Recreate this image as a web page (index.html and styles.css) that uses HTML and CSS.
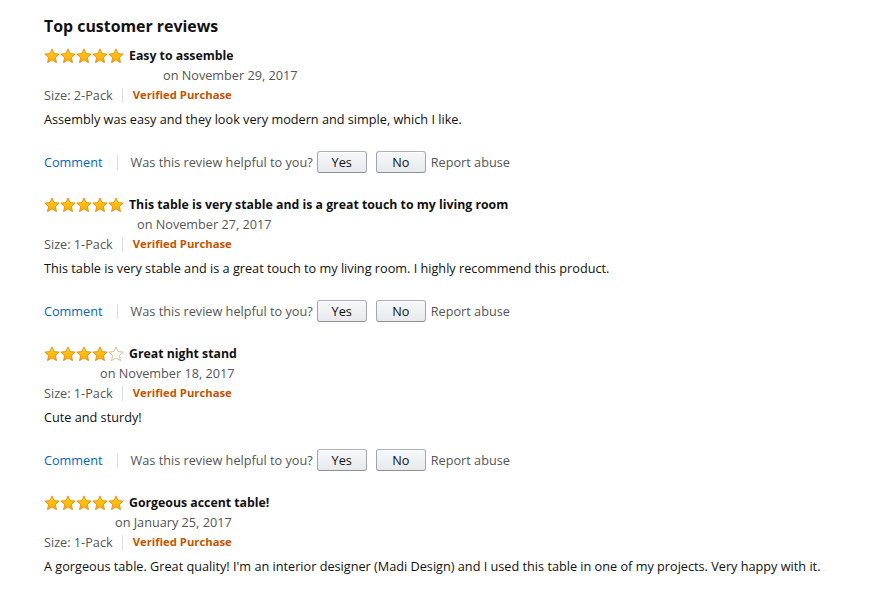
FILE: index.html
```html
<!DOCTYPE html>
<html>
<head>
<meta charset="utf-8">
<link rel="stylesheet" href="styles.css">
</head>
<body>
<svg width="0" height="0" class="defs">
  <defs>
    <linearGradient id="gold" x1="0" y1="0" x2="0" y2="1">
      <stop offset="0" stop-color="#ffd21f"/>
      <stop offset="1" stop-color="#ffa800"/>
    </linearGradient>
    <symbol id="star" viewBox="0 0 16 16">
      <polygon points="8,0.9 10.1,5.6 15.2,6.1 11.3,9.5 12.5,14.6 8,11.9 3.5,14.6 4.7,9.5 0.8,6.1 5.9,5.6" fill="url(#gold)" stroke="#e38b0c" stroke-width="0.9" stroke-linejoin="round"/>
    </symbol>
    <symbol id="star-empty" viewBox="0 0 16 16">
      <polygon points="8,0.9 10.1,5.6 15.2,6.1 11.3,9.5 12.5,14.6 8,11.9 3.5,14.6 4.7,9.5 0.8,6.1 5.9,5.6" fill="#fff" stroke="#d6b98a" stroke-width="0.9" stroke-linejoin="round"/>
    </symbol>
  </defs>
</svg>
<main class="reviews">
  <h2 class="heading">Top customer reviews</h2>

  <section class="review">
    <div class="head">
      <span class="stars"><svg><use href="#star"/></svg><svg><use href="#star"/></svg><svg><use href="#star"/></svg><svg><use href="#star"/></svg><svg><use href="#star"/></svg></span>
      <span class="title">Easy to assemble</span>
    </div>
    <div class="date indent-1">on November 29, 2017</div>
    <div class="meta"><span class="size">Size: 2-Pack</span><span class="sep"></span><span class="verified">Verified Purchase</span></div>
    <p class="body">Assembly was easy and they look very modern and simple, which I like.</p>
    <div class="actions">
      <a class="comment">Comment</a><span class="sep"></span><span class="helpful">Was this review helpful to you?</span>
      <button class="btn">Yes</button><button class="btn">No</button><a class="report">Report abuse</a>
    </div>
  </section>

  <section class="review">
    <div class="head">
      <span class="stars"><svg><use href="#star"/></svg><svg><use href="#star"/></svg><svg><use href="#star"/></svg><svg><use href="#star"/></svg><svg><use href="#star"/></svg></span>
      <span class="title">This table is very stable and is a great touch to my living room</span>
    </div>
    <div class="date indent-2">on November 27, 2017</div>
    <div class="meta"><span class="size">Size: 1-Pack</span><span class="sep"></span><span class="verified">Verified Purchase</span></div>
    <p class="body">This table is very stable and is a great touch to my living room. I highly recommend this product.</p>
    <div class="actions">
      <a class="comment">Comment</a><span class="sep"></span><span class="helpful">Was this review helpful to you?</span>
      <button class="btn">Yes</button><button class="btn">No</button><a class="report">Report abuse</a>
    </div>
  </section>

  <section class="review">
    <div class="head">
      <span class="stars"><svg><use href="#star"/></svg><svg><use href="#star"/></svg><svg><use href="#star"/></svg><svg><use href="#star"/></svg><svg><use href="#star-empty"/></svg></span>
      <span class="title">Great night stand</span>
    </div>
    <div class="date indent-3">on November 18, 2017</div>
    <div class="meta"><span class="size">Size: 1-Pack</span><span class="sep"></span><span class="verified">Verified Purchase</span></div>
    <p class="body">Cute and sturdy!</p>
    <div class="actions">
      <a class="comment">Comment</a><span class="sep"></span><span class="helpful">Was this review helpful to you?</span>
      <button class="btn">Yes</button><button class="btn">No</button><a class="report">Report abuse</a>
    </div>
  </section>

  <section class="review">
    <div class="head">
      <span class="stars"><svg><use href="#star"/></svg><svg><use href="#star"/></svg><svg><use href="#star"/></svg><svg><use href="#star"/></svg><svg><use href="#star"/></svg></span>
      <span class="title">Gorgeous accent table!</span>
    </div>
    <div class="date indent-4">on January 25, 2017</div>
    <div class="meta"><span class="size">Size: 1-Pack</span><span class="sep"></span><span class="verified">Verified Purchase</span></div>
    <p class="body">A gorgeous table. Great quality! I'm an interior designer (Madi Design) and I used this table in one of my projects. Very happy with it.</p>
  </section>
</main>
</body>
</html>
```
FILE: styles.css
```css
html, body {
  margin: 0;
  padding: 0;
  background: #fff;
}
.defs {
  position: absolute;
  width: 0;
  height: 0;
}
.reviews {
  font-family: "Open Sans", Arial, sans-serif;
  font-size: 12.7px;
  color: #111;
  padding: 14px 0 0 44px;
}
.heading {
  margin: 0;
  font-size: 15.9px;
  font-weight: 700;
  line-height: 24px;
  height: 24px;
  margin-bottom: 7px;
}
.review {
  margin-bottom: 21px;
}
.head {
  display: flex;
  align-items: center;
  height: 20px;
  padding-top: 1px;
  margin-bottom: -1px;
}
.stars {
  display: flex;
  width: 80px;
  margin-right: 5px;
}
.stars svg {
  width: 16px;
  height: 16px;
  display: block;
}
.title {
  font-weight: 700;
  font-size: 12.3px;
  line-height: 20px;
}
.date {
  line-height: 20px;
  color: #555;
}
.indent-1 { padding-left: 119px; }
.indent-2 { padding-left: 93px; }
.indent-3 { padding-left: 56px; }
.indent-4 { padding-left: 71px; }
.meta {
  display: flex;
  align-items: center;
  line-height: 20px;
  height: 20px;
}
.size {
  color: #555;
}
.sep {
  display: inline-block;
  width: 1px;
  height: 15px;
  background: #ddd;
  margin: 0 9px 0 9px;
}
.verified {
  color: #c45500;
  font-weight: 700;
  font-size: 11.3px;
  margin-left: 1px;
}
.body {
  margin: 4px 0 0 0;
  line-height: 20px;
}
.actions {
  display: flex;
  align-items: center;
  height: 22px;
  margin-top: 22px;
}
.comment {
  color: #0066c0;
}
.actions .sep {
  margin: 0 13px 0 14px;
}
.helpful {
  color: #555;
  margin-right: 4px;
}
.btn {
  font-family: inherit;
  font-size: 12.7px;
  color: #111;
  width: 50px;
  height: 22px;
  padding: 0;
  margin: 0 9px 0 0;
  border: 1px solid #adb1b8;
  border-color: #adb1b8 #a2a6ac #8d9096;
  border-radius: 3px;
  background: linear-gradient(#f7f8fa, #e7e9ec);
  box-shadow: inset 0 1px 0 rgba(255,255,255,.6);
}
.btn + .btn {
  margin-right: 5px;
}
.report {
  color: #555;
}
```
